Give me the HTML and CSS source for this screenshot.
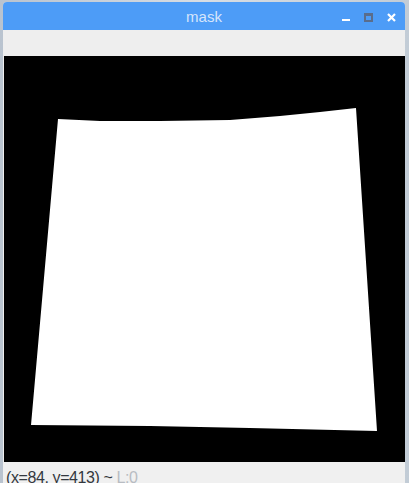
FILE: index.html
```html
<!DOCTYPE html>
<html>
<head>
<meta charset="utf-8">
<link rel="stylesheet" href="styles.css">
</head>
<body>
<div class="window">
  <div class="titlebar">
    <span class="title">mask</span>
    <div class="controls">
      <span class="btn min"></span>
      <span class="btn max"></span>
      <svg class="btn close" width="9" height="9" viewBox="0 0 9 9"><path d="M1 1 L8 8 M8 1 L1 8" stroke="#fff" stroke-width="2.2"/></svg>
    </div>
  </div>
  <div class="toolbar"></div>
  <div class="canvas">
    <svg width="401" height="406" viewBox="4 56 401 406">
      <path d="M58 119 L100 121 L160 121 L230 120 L280 116 L320 112 L356 108 L377 431 L250 428 L150 426 L31 425 Z" fill="#fff"/>
    </svg>
  </div>
  <div class="status">(x=84, y=413) ~ <span class="dim">L:0</span></div>
</div>
</body>
</html>
```
FILE: styles.css
```css
html, body {
  margin: 0;
  padding: 0;
}
body {
  width: 409px;
  height: 483px;
  background: linear-gradient(90deg, #b9c3cf 0%, #d8dde3 50%, #c2ccd6 100%);
  overflow: hidden;
  font-family: "Liberation Sans", Arial, sans-serif;
}
.window {
  margin: 2px 4px 0 3px;
  width: 402px;
  height: 481px;
  display: flex;
  flex-direction: column;
  background: #eeeeee;
  border-radius: 4px 4px 0 0;
  overflow: hidden;
}
.titlebar {
  height: 28px;
  flex: none;
  background: #4d9cf7;
  position: relative;
  display: flex;
  align-items: center;
  justify-content: center;
}
.title {
  color: #d6e5fb;
  font-family: "Liberation Sans", Arial, sans-serif;
  font-size: 15px;
  margin-top: 1px;
}
.controls {
  position: absolute;
  right: 9px;
  top: 11px;
  display: flex;
  align-items: flex-start;
  gap: 14px;
}
.btn {
  display: block;
}
.min {
  width: 8px;
  height: 2px;
  background: #ffffff;
  margin-top: 6px;
}
.max {
  width: 5px;
  height: 4px;
  border: 2px solid #5a6d8c;
  border-top-width: 3px;
}
.toolbar {
  height: 26px;
  flex: none;
  background: #eeeeee;
}
.canvas {
  height: 406px;
  flex: none;
  background: #000;
  margin-left: 1px;
}
.canvas svg {
  display: block;
}
.status {
  flex: none;
  height: 21px;
  padding-left: 3px;
  font-size: 16px;
  line-height: 31px;
  color: #33383e;
  white-space: nowrap;
  background: #f0f0f0;
  letter-spacing: -0.4px;
}
.dim {
  color: #b8bcc2;
}
```
